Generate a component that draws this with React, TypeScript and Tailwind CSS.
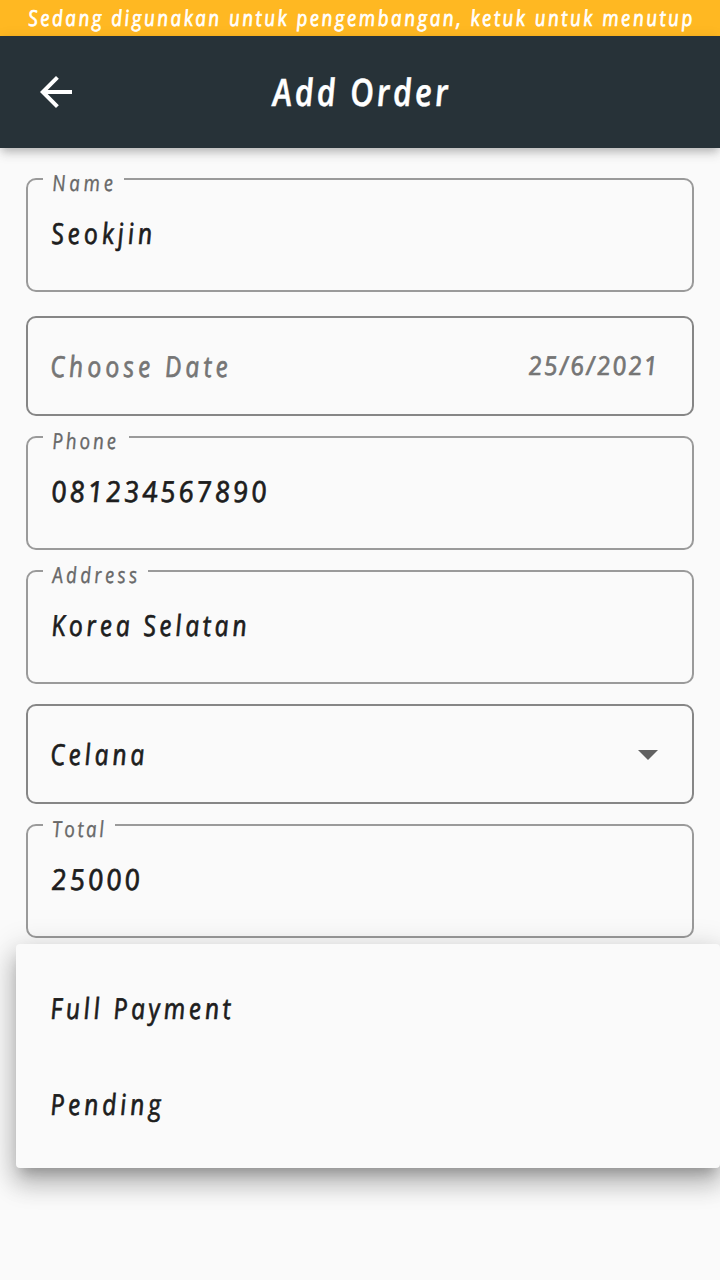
import { useState, type ReactNode } from "react";

type HandProps = { className?: string; scale?: string; stroke?: string; children: ReactNode };

function Hand({
  className = "",
  scale = "scale-x-[0.86]",
  stroke = "[-webkit-text-stroke:0.7px_currentColor]",
  children,
}: HandProps) {
  return (
    <span className={`inline-block skew-x-[6deg] whitespace-nowrap italic ${scale} ${stroke} ${className}`}>
      {children}
    </span>
  );
}

type FieldProps = {
  label: string;
  value: string;
  notch: string;
  labelSpacing: string;
  valueSpacing: string;
  numeric?: boolean;
};

function OutlinedField({ label, value, notch, labelSpacing, valueSpacing, numeric = false }: FieldProps) {
  return (
    <div className="relative h-[114px] rounded-[10px] border-2 border-[#9a9a9a] pt-[35px] pl-[23px]">
      <div className={`absolute -top-3 left-[15px] flex h-7 items-center bg-[#fafafa] pl-[9px] ${notch}`}>
        <Hand
          stroke="[-webkit-text-stroke:0.35px_currentColor]"
          className={`origin-left text-[22px] leading-7 text-[#686868] ${labelSpacing}`}
        >
          {label}
        </Hand>
      </div>
      <div className="flex h-9 items-center">
        <Hand
          scale={numeric ? "scale-x-[0.95]" : "scale-x-[0.86]"}
          className={`origin-left text-[29px] leading-9 text-[#1d1d1d] ${valueSpacing}`}
        >
          {value}
        </Hand>
      </div>
    </div>
  );
}

export default function App() {
  const [banner, setBanner] = useState(true);

  return (
    <div className="relative flex h-[1280px] w-[720px] flex-col overflow-hidden bg-[#fafafa] font-['Open_Sans',sans-serif]">
      {banner && (
        <button
          type="button"
          onClick={() => setBanner(false)}
          className="flex h-9 shrink-0 items-start bg-[#ffb822] pl-[28px] text-white"
        >
          <Hand className="origin-left text-[22px] leading-[34px] tracking-[2.78px]">
            Sedang digunakan untuk pengembangan, ketuk untuk menutup
          </Hand>
        </button>
      )}

      <header className="z-10 flex h-28 shrink-0 items-center bg-[#273238] pl-[32px] text-white shadow-[0_4px_8px_-2px_rgba(0,0,0,0.2),0_8px_10px_rgba(0,0,0,0.07),0_2px_14px_rgba(0,0,0,0.08)]">
        <button type="button" aria-label="Back" className="size-12">
          <svg viewBox="0 0 24 24" className="size-12" fill="currentColor">
            <path d="M20 11H7.83l5.59-5.59L12 4l-8 8 8 8 1.41-1.41L7.83 13H20v-2z" />
          </svg>
        </button>
        <h1 className="ml-[192px] flex items-center pb-[3px]">
          <Hand
            stroke="[-webkit-text-stroke:0.4px_currentColor]"
            className="origin-left text-[38px] leading-[48px] font-semibold tracking-[3.3px]"
          >
            Add Order
          </Hand>
        </h1>
      </header>

      <main className="flex flex-col px-[26px] pt-[30px]">
        <OutlinedField label="Name" value="Seokjin" notch="w-[81px]" labelSpacing="tracking-[4.2px]" valueSpacing="tracking-[4.4px]" />

        <div className="mt-6 flex h-[100px] items-center justify-between rounded-[10px] border-2 border-[#868686] pr-[33px] pl-[22px] text-[#757575]">
          <Hand className="origin-left text-[29px] leading-9 tracking-[4.6px]">Choose Date</Hand>
          <Hand scale="scale-x-[0.95]" className="mb-[2px] origin-right text-[26px] leading-9 tracking-[2.2px]">
            25/6/2021
          </Hand>
        </div>

        <div className="mt-5">
          <OutlinedField label="Phone" value="081234567890" notch="w-[86px]" labelSpacing="tracking-[3.3px]" valueSpacing="tracking-[3.15px]" numeric />
        </div>

        <div className="mt-5">
          <OutlinedField label="Address" value="Korea Selatan" notch="w-[105px]" labelSpacing="tracking-[3.7px]" valueSpacing="tracking-[4.1px]" />
        </div>

        <div className="mt-5 flex h-[100px] items-center justify-between rounded-[10px] border-2 border-[#868686] pr-5 pl-[22px] text-[#1d1d1d]">
          <Hand className="origin-left text-[29px] leading-9 tracking-[4.2px]">Celana</Hand>
          <svg viewBox="0 0 24 24" className="size-12 text-[#616161]" fill="currentColor">
            <path d="M7 10l5 5 5-5z" />
          </svg>
        </div>

        <div className="mt-5">
          <OutlinedField label="Total" value="25000" notch="w-[72px]" labelSpacing="tracking-[2.9px]" valueSpacing="tracking-[3.3px]" numeric />
        </div>
      </main>

      <ul
        role="listbox"
        className="absolute top-[944px] left-4 flex h-56 w-[704px] flex-col rounded-[4px] bg-[#fafafa] py-4 pl-[34px] text-[#1d1d1d] shadow-[0_10px_12px_-6px_rgba(0,0,0,0.22),0_16px_24px_2px_rgba(0,0,0,0.18),0_6px_30px_4px_rgba(0,0,0,0.14)]"
      >
        <li role="option" className="flex h-24 items-center">
          <Hand className="origin-left text-[29px] leading-9 tracking-[4.1px]">Full Payment</Hand>
        </li>
        <li role="option" className="flex h-24 items-center">
          <Hand className="origin-left text-[29px] leading-9 tracking-[4.2px]">Pending</Hand>
        </li>
      </ul>
    </div>
  );
}
